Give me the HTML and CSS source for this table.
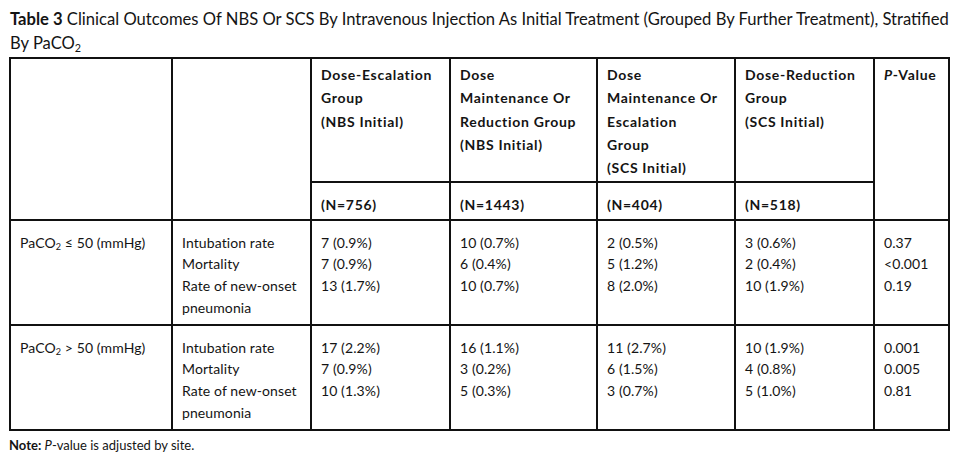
FILE: index.html
```html
<!DOCTYPE html>
<html>
<head>
<meta charset="utf-8">
<link rel="stylesheet" href="styles.css">
</head>
<body>
<div class="page">
  <p class="caption"><b>Table 3</b> Clinical Outcomes Of NBS Or SCS By Intravenous Injection As Initial Treatment (Grouped By Further Treatment), Stratified By PaCO<sub>2</sub></p>
  <table class="tbl">
    <colgroup>
      <col class="c1"><col class="c2"><col class="c3"><col class="c4"><col class="c5"><col class="c6"><col class="c7">
    </colgroup>
    <thead>
      <tr>
        <th rowspan="2"></th>
        <th rowspan="2"></th>
        <th class="grp">Dose-Escalation<br>Group<br>(NBS Initial)</th>
        <th class="grp">Dose<br>Maintenance Or<br>Reduction Group<br>(NBS Initial)</th>
        <th class="grp">Dose<br>Maintenance Or<br>Escalation<br>Group<br>(SCS Initial)</th>
        <th class="grp">Dose-Reduction<br>Group<br>(SCS Initial)</th>
        <th rowspan="2" class="grp"><i>P</i>-Value</th>
      </tr>
      <tr>
        <th class="n">(N=756)</th>
        <th class="n">(N=1443)</th>
        <th class="n">(N=404)</th>
        <th class="n">(N=518)</th>
      </tr>
    </thead>
    <tbody>
      <tr>
        <td>PaCO<sub>2</sub> ≤ 50 (mmHg)</td>
        <td>Intubation rate<br>Mortality<br>Rate of new-onset<br>pneumonia</td>
        <td>7 (0.9%)<br>7 (0.9%)<br>13 (1.7%)</td>
        <td>10 (0.7%)<br>6 (0.4%)<br>10 (0.7%)</td>
        <td>2 (0.5%)<br>5 (1.2%)<br>8 (2.0%)</td>
        <td>3 (0.6%)<br>2 (0.4%)<br>10 (1.9%)</td>
        <td>0.37<br>&lt;0.001<br>0.19</td>
      </tr>
      <tr>
        <td>PaCO<sub>2</sub> &gt; 50 (mmHg)</td>
        <td>Intubation rate<br>Mortality<br>Rate of new-onset<br>pneumonia</td>
        <td>17 (2.2%)<br>7 (0.9%)<br>10 (1.3%)</td>
        <td>16 (1.1%)<br>3 (0.2%)<br>5 (0.3%)</td>
        <td>11 (2.7%)<br>6 (1.5%)<br>3 (0.7%)</td>
        <td>10 (1.9%)<br>4 (0.8%)<br>5 (1.0%)</td>
        <td>0.001<br>0.005<br>0.81</td>
      </tr>
    </tbody>
  </table>
  <p class="note"><b>Note:</b> <i>P</i>-value is adjusted by site.</p>
</div>
</body>
</html>
```

FILE: styles.css
```css
html, body {
  margin: 0;
  padding: 0;
  background: #fff;
}
body {
  font-family: "Lato", "Open Sans", sans-serif;
  color: #141414;
}
.page {
  padding: 7px 0 0 9px;
}
.caption {
  margin: 0;
  width: 945px;
  font-size: 16.6px;
  line-height: 24px;
  padding-left: 1px;
}
.caption b {
  font-weight: 700;
}
sub {
  font-size: 0.65em;
  vertical-align: -0.25em;
  line-height: 0;
}
.tbl {
  margin-top: 2px;
  width: 939px;
  border-collapse: collapse;
  table-layout: fixed;
  font-size: 14px;
}
.c1 { width: 162px; }
.c2 { width: 139px; }
.c3 { width: 139px; }
.c4 { width: 147px; }
.c5 { width: 138px; }
.c6 { width: 139px; }
.c7 { width: 75px; }
.tbl th, .tbl td {
  border: 2px solid #111;
  text-align: left;
  vertical-align: top;
  padding: 0 2px 0 9px;
}
.tbl th {
  font-weight: 700;
  line-height: 23.25px;
  letter-spacing: 0.7px;
}
.tbl th.grp {
  padding-top: 4px;
  padding-bottom: 2px;
}
.tbl th.n {
  padding-top: 10px;
  padding-bottom: 2px;
}
.tbl td {
  line-height: 21.8px;
  letter-spacing: 0.1px;
  padding-top: 11px;
  padding-bottom: 5px;
}
.note {
  margin: 5px 0 0 0;
  font-size: 13px;
  line-height: 18px;
}
```
